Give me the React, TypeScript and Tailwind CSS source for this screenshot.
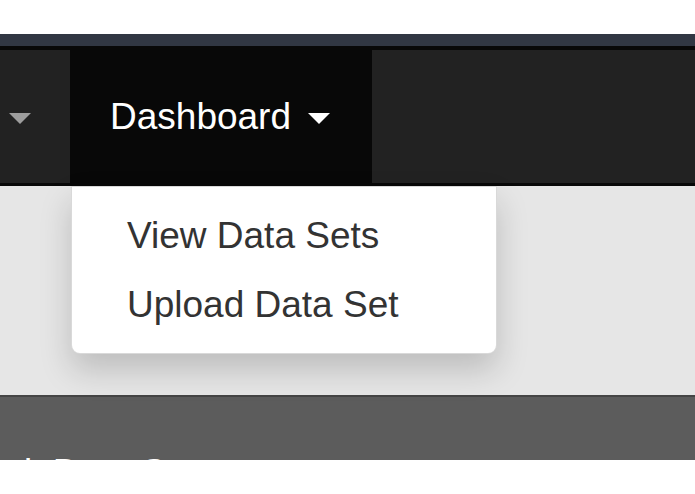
import React from "react";

const font = { fontFamily: '"Liberation Sans", Arial, sans-serif' };

const Caret = ({ color }: { color: string }) => (
  <span
    className={`inline-block h-0 w-0 border-x-[11px] border-t-[11px] border-x-transparent ${color}`}
  />
);

export default function App() {
  return (
    <div className="w-[695px] h-[494px] overflow-hidden bg-white" style={font}>
      {/* window top */}
      <div className="h-[34px] bg-white" />
      <div className="h-[12px] bg-[#313743]" />

      {/* Navbar */}
      <nav className="relative flex h-[140px] border-t-4 border-b-[3px] border-[#080808] bg-[#222222]">
        <div className="flex items-center pl-[9px] pr-[39px]">
          <span className="mt-[5px] leading-none">
            <Caret color="border-t-[#9d9d9d]" />
          </span>
        </div>

        <div className="relative -mt-[3px] flex items-center bg-[#080808] pl-[40px] pr-[42px]">
          <span className="mt-[2px] text-[37px] leading-[37px] text-white">Dashboard</span>
          <span className="ml-[17px] mt-[7px] leading-none">
            <Caret color="border-t-white" />
          </span>

          {/* Dropdown */}
          <div className="absolute left-[1px] top-[139px] z-10 w-[426px] rounded-b-[9px] border border-black/15 bg-white py-[14px] shadow-[0_16px_32px_rgba(0,0,0,0.18)]">
            <div className="px-[55px] py-[8px] text-[37px] leading-[53px] text-[#333333]">
              View Data Sets
            </div>
            <div className="px-[55px] py-[8px] text-[37px] leading-[53px] text-[#333333]">
              Upload Data Set
            </div>
          </div>
        </div>

        <div className="flex-1" />
      </nav>

      {/* Page body */}
      <div className="h-[209px] bg-[#e6e6e6]" />
      <div className="h-[65px] overflow-hidden border-t-2 border-[#454545] bg-[#5c5c5c] pl-[24px] pt-[57px]">
        <span className="text-[37px] leading-[37px] text-white">i&nbsp;&nbsp;Data Sets</span>
      </div>
    </div>
  );
}
